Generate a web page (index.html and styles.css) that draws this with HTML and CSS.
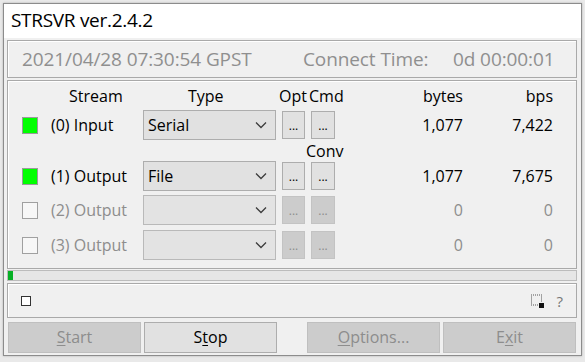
FILE: index.html
```html
<!DOCTYPE html>
<html>
<head>
<meta charset="utf-8">
<link rel="stylesheet" href="styles.css">
</head>
<body>
<div class="win">
  <div class="titlebar">STRSVR ver.2.4.2</div>
  <div class="client">
    <div class="panel status">
      <span class="time">2021/04/28 07:30:54 GPST</span>
      <span class="ct">Connect Time:</span>
      <span class="ctv">0d 00:00:01</span>
    </div>
    <div class="panel main">
      <div class="grid">
        <div class="h h-stream">Stream</div>
        <div class="h h-type">Type</div>
        <div class="h h-opt">Opt</div>
        <div class="h h-cmd">Cmd</div>
        <div class="h h-bytes">bytes</div>
        <div class="h h-bps">bps</div>

        <div class="cb on r1"></div>
        <div class="lbl r1">(0) Input</div>
        <div class="combo r1"><span>Serial</span><svg class="chev" viewBox="0 0 12 8"><path d="M1 1.5 L6 6.5 L11 1.5" fill="none" stroke="#3c3c3c" stroke-width="1.3"/></svg></div>
        <div class="btn3 r1">...</div>
        <div class="btn3 r1">...</div>
        <div class="num r1">1,077</div>
        <div class="num r1">7,422</div>

        <div class="conv">Conv</div>

        <div class="cb on r2"></div>
        <div class="lbl r2">(1) Output</div>
        <div class="combo r2"><span>File</span><svg class="chev" viewBox="0 0 12 8"><path d="M1 1.5 L6 6.5 L11 1.5" fill="none" stroke="#3c3c3c" stroke-width="1.3"/></svg></div>
        <div class="btn3 r2">...</div>
        <div class="btn3 r2">...</div>
        <div class="num r2">1,077</div>
        <div class="num r2">7,675</div>

        <div class="cb r4"></div>
        <div class="lbl dis r4">(2) Output</div>
        <div class="combo dis r4"><span></span><svg class="chev" viewBox="0 0 12 8"><path d="M1 1.5 L6 6.5 L11 1.5" fill="none" stroke="#3c3c3c" stroke-width="1.3"/></svg></div>
        <div class="btn3 dis r4">...</div>
        <div class="btn3 dis r4">...</div>
        <div class="num dis r4">0</div>
        <div class="num dis r4">0</div>

        <div class="cb r5"></div>
        <div class="lbl dis r5">(3) Output</div>
        <div class="combo dis r5"><span></span><svg class="chev" viewBox="0 0 12 8"><path d="M1 1.5 L6 6.5 L11 1.5" fill="none" stroke="#3c3c3c" stroke-width="1.3"/></svg></div>
        <div class="btn3 dis r5">...</div>
        <div class="btn3 dis r5">...</div>
        <div class="num dis r5">0</div>
        <div class="num dis r5">0</div>
      </div>
    </div>
    <div class="progress"><div class="fill" style="width:5px"></div></div>
    <div class="panel bottom">
      <div class="smallcb"></div>
      <div class="spacer"></div>
      <svg class="sel" viewBox="0 0 15 15"><path d="M1 1h1M3 1h1M5 1h1M7 1h1M9 1h1M11 1h1M1 3h1M1 5h1M1 7h1M1 9h1M1 11h1M3 11h1M5 11h1M7 11h1M11 3h1M11 5h1M11 7h1" stroke="#555" stroke-width="1"/><rect x="9" y="9" width="5" height="5" fill="#111"/></svg>
      <span class="help">?</span>
    </div>
    <div class="buttons">
      <div class="btn dis"><u>S</u>tart</div>
      <div class="btn">S<u>t</u>op</div>
      <div class="gap"></div>
      <div class="btn dis"><u>O</u>ptions...</div>
      <div class="btn dis">E<u>x</u>it</div>
    </div>
  </div>
</div>
</body>
</html>
```

FILE: styles.css
```css
html, body {
  margin: 0;
  padding: 0;
}
body {
  width: 585px;
  height: 362px;
  overflow: hidden;
  background: #e9e9e9;
  font-family: "Open Sans", "Noto Sans", sans-serif;
  color: #000;
}
.win {
  margin: 3px 0 0 3px;
  width: 577px;
  height: 351px;
  border: 1px solid #8c8c8c;
  background: #f0f0f0;
  display: flex;
  flex-direction: column;
  box-shadow: 0 0 2px rgba(0,0,0,0.25);
}
.titlebar {
  height: 34px;
  background: #fff;
  font-size: 19px;
  line-height: 32px;
  padding-left: 7px;
  letter-spacing: -0.3px;
}
.client {
  flex: 1;
  padding: 2px 4px 0 3px;
  display: flex;
  flex-direction: column;
}
.panel {
  border: 1px solid #a9a9a9;
  box-shadow: inset 1px 1px 0 #fff;
  box-sizing: border-box;
}
.status {
  height: 38px;
  display: flex;
  align-items: center;
  font-size: 19px;
  color: #8f8f8f;
  letter-spacing: -0.1px;
}
.status .time { margin-left: 14px; width: 281px; }
.status .ct { width: 150px; }
.main {
  margin-top: 2px;
  height: 189px;
  padding: 5px 0 0 14px;
}
.grid {
  display: grid;
  grid-template-columns: 29px 92px 139px 29px 24px 128px 90px;
  grid-template-rows: 24px 30px 21px 30px 34px 35px;
  font-size: 16px;
}
.h { grid-row: 1; line-height: 20px; white-space: nowrap; }
.h-stream { grid-column: 2; margin-left: 18px; }
.h-type { grid-column: 3; margin-left: 45px; }
.h-opt { grid-column: 4; margin-left: -3px; }
.h-cmd { grid-column: 5; margin-left: -2px; }
.h-bytes { grid-column: 6; text-align: right; }
.h-bps { grid-column: 7; text-align: right; }
.r1 { grid-row: 2; }
.r2 { grid-row: 4; }
.cb {
  width: 16px;
  height: 17px;
  box-sizing: border-box;
  border: 1px solid #a0a0a0;
  background: #f7f7f7;
  align-self: center;
}
.cb.on { background: #00ff00; border-color: #9a9a9a; }
.lbl { align-self: center; white-space: nowrap; }
.lbl.dis, .num.dis { color: #8d8d8d; }
.combo {
  width: 133px;
  height: 30px;
  box-sizing: border-box;
  border: 1px solid #adadad;
  background: #e1e1e1;
  display: flex;
  align-items: center;
  padding-left: 4px;
  padding-right: 8px;
}
.combo span { flex: 1; }
.combo.dis { background: #e3e3e3; border-color: #b9b9b9; }
.chev { width: 12px; height: 8px; }
.btn3 {
  width: 23px;
  height: 28px;
  box-sizing: border-box;
  border: 1px solid #adadad;
  background: #e1e1e1;
  align-self: center;
  text-align: center;
  font-size: 12px;
  line-height: 28px;
}
.btn3 + .btn3 { width: 24px; }
.btn3.dis { background: #cccccc; border-color: #c3c3c3; color: #8d8d8d; }
.num { align-self: center; text-align: right; }
.conv {
  grid-column: 5;
  grid-row: 3;
  margin-left: -5px;
  align-self: center;
  white-space: nowrap;
}
.r4 { grid-row: 5; align-self: end; }
.r5 { grid-row: 6; align-self: end; }
.cb.r4, .cb.r5 { margin-bottom: 6px; }
.lbl.r4, .lbl.r5, .num.r4, .num.r5 { margin-bottom: 4px; }
.btn3.r4, .btn3.r5 { margin-bottom: 1px; }
.progress {
  margin-top: 1px;
  height: 11px;
  box-sizing: border-box;
  border: 1px solid #bcbcbc;
  background: #e6e6e6;
}
.progress .fill { height: 100%; background: #06b025; }
.bottom {
  margin-top: 2px;
  height: 35px;
  display: flex;
  align-items: center;
  padding-left: 13px;
  padding-right: 13px;
}
.smallcb {
  width: 10px;
  height: 10px;
  box-sizing: border-box;
  border: 1px solid #333;
  background: #fff;
}
.spacer { flex: 1; }
.sel { width: 15px; height: 15px; margin-top: 2px; }
.help { margin-left: 12px; font-size: 15px; color: #777; }
.buttons {
  margin-top: 4px;
  display: flex;
  gap: 3px;
  margin-left: 1px;
}
.btn {
  width: 133px;
  height: 31px;
  box-sizing: border-box;
  border: 1px solid #adadad;
  background: #e1e1e1;
  text-align: center;
  font-size: 16px;
  line-height: 29px;
}
.btn.dis { background: #cccccc; border-color: #bfbfbf; color: #8d8d8d; }
.btn u { text-underline-offset: 2px; }
.gap { width: 24px; }
```
